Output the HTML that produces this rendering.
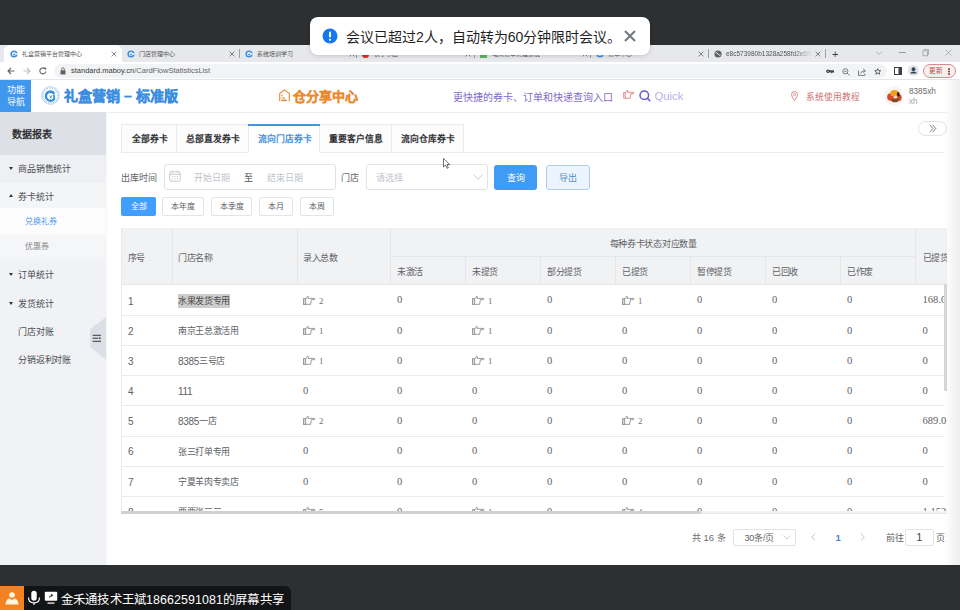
<!DOCTYPE html>
<html lang="zh-CN"><head><meta charset="utf-8">
<style>
*{box-sizing:border-box;margin:0;padding:0}
html,body{width:960px;height:610px;overflow:hidden;background:#fff;font-family:"Liberation Sans",sans-serif;color:#606266}
.a{position:absolute;white-space:nowrap}
.c{display:flex;align-items:center;justify-content:center}
</style></head><body>
<div class="a" style="left:0;top:0;width:960px;height:45px;background:#2c3033"></div>
<div class="a" style="left:0;top:45px;width:960px;height:17px;background:#e6e8eb"></div>
<div class="a" style="left:4px;top:45px;width:118px;height:17px;background:#fff;border-radius:6px 6px 0 0"></div>
<svg class="a" style="left:10px;top:50px" width="8" height="8" viewBox="0 0 8 8"><circle cx="4" cy="4" r="3.6" fill="#3d8fdc"/><circle cx="4" cy="4" r="2" fill="#fff"/><rect x="4" y="3.3" width="3.6" height="1.4" fill="#fff"/><circle cx="4.2" cy="4.4" r="1" fill="#3d8fdc"/></svg>
<div class="a" style="left:22px;top:50px;font-size:6px;line-height:8px;color:#555">礼盒营销平台管理中心</div>
<svg class="a" style="left:110.8px;top:50.5px" width="6" height="6" viewBox="0 0 6 6"><path d="M0.6 0.6 L5.4 5.4 M5.4 0.6 L0.6 5.4" stroke="#5a5e62" stroke-width="0.75"/></svg>
<svg class="a" style="left:127px;top:50px" width="8" height="8" viewBox="0 0 8 8"><circle cx="4" cy="4" r="3.6" fill="#3d8fdc"/><circle cx="4" cy="4" r="2" fill="#fff"/><rect x="4" y="3.3" width="3.6" height="1.4" fill="#fff"/><circle cx="4.2" cy="4.4" r="1" fill="#3d8fdc"/></svg>
<div class="a" style="left:139px;top:50px;font-size:6px;line-height:8px;color:#555">门店管理中心</div>
<svg class="a" style="left:229.0px;top:50.5px" width="6" height="6" viewBox="0 0 6 6"><path d="M0.6 0.6 L5.4 5.4 M5.4 0.6 L0.6 5.4" stroke="#5a5e62" stroke-width="0.75"/></svg>
<div class="a" style="left:239px;top:49px;width:1px;height:9px;background:#9aa0a6"></div>
<svg class="a" style="left:245px;top:50px" width="8" height="8" viewBox="0 0 8 8"><circle cx="4" cy="4" r="3.6" fill="#3d8fdc"/><circle cx="4" cy="4" r="2" fill="#fff"/><rect x="4" y="3.3" width="3.6" height="1.4" fill="#fff"/><circle cx="4.2" cy="4.4" r="1" fill="#3d8fdc"/></svg>
<div class="a" style="left:257px;top:50px;font-size:6px;line-height:8px;color:#555">系统培训学习</div>
<svg class="a" style="left:349.0px;top:50.5px" width="6" height="6" viewBox="0 0 6 6"><path d="M0.6 0.6 L5.4 5.4 M5.4 0.6 L0.6 5.4" stroke="#5a5e62" stroke-width="0.75"/></svg>
<div class="a" style="left:356px;top:49px;width:1px;height:9px;background:#9aa0a6"></div>
<div class="a" style="left:362px;top:51px;width:7px;height:7px;border-radius:50%;background:#d93025"></div>
<div class="a" style="left:374px;top:50px;font-size:6px;line-height:8px;color:#555">快手小店</div>
<svg class="a" style="left:465.0px;top:50.5px" width="6" height="6" viewBox="0 0 6 6"><path d="M0.6 0.6 L5.4 5.4 M5.4 0.6 L0.6 5.4" stroke="#5a5e62" stroke-width="0.75"/></svg>
<div class="a" style="left:474px;top:49px;width:1px;height:9px;background:#9aa0a6"></div>
<div class="a" style="left:480px;top:51px;width:7px;height:7px;background:#5cb85c"></div>
<div class="a" style="left:492px;top:50px;font-size:6px;line-height:8px;color:#555">电商订单处理系统</div>
<svg class="a" style="left:582.0px;top:50.5px" width="6" height="6" viewBox="0 0 6 6"><path d="M0.6 0.6 L5.4 5.4 M5.4 0.6 L0.6 5.4" stroke="#5a5e62" stroke-width="0.75"/></svg>
<div class="a" style="left:590px;top:49px;width:1px;height:9px;background:#9aa0a6"></div>
<svg class="a" style="left:596px;top:50px" width="8" height="8" viewBox="0 0 8 8"><circle cx="4" cy="4" r="3.6" fill="#3d8fdc"/><circle cx="4" cy="4" r="2" fill="#fff"/><rect x="4" y="3.3" width="3.6" height="1.4" fill="#fff"/><circle cx="4.2" cy="4.4" r="1" fill="#3d8fdc"/></svg>
<div class="a" style="left:608px;top:50px;font-size:6px;line-height:8px;color:#555">订单中心</div>
<svg class="a" style="left:698.0px;top:50.5px" width="6" height="6" viewBox="0 0 6 6"><path d="M0.6 0.6 L5.4 5.4 M5.4 0.6 L0.6 5.4" stroke="#5a5e62" stroke-width="0.75"/></svg>
<div class="a" style="left:708px;top:49px;width:1px;height:9px;background:#9aa0a6"></div>
<svg class="a" style="left:714px;top:50px" width="8" height="8" viewBox="0 0 8 8"><circle cx="4" cy="4" r="3.6" fill="#5f6368"/><path d="M1.5 3 Q3 2 4 4 T6.5 5" stroke="#fff" stroke-width="0.8" fill="none"/></svg>
<div class="a" style="left:726px;top:50px;width:86px;overflow:hidden;font-size:6.5px;line-height:8px;color:#555;-webkit-mask-image:linear-gradient(to right,#000 80%,transparent)">e8c573980b1328a258fd2e6f8</div>
<svg class="a" style="left:815.0px;top:50.5px" width="6" height="6" viewBox="0 0 6 6"><path d="M0.6 0.6 L5.4 5.4 M5.4 0.6 L0.6 5.4" stroke="#5a5e62" stroke-width="0.75"/></svg>
<div class="a" style="left:825px;top:49px;width:1px;height:9px;background:#9aa0a6"></div>
<div class="a" style="left:832px;top:47.5px;font-size:11px;line-height:13px;color:#3c4043">+</div>
<svg class="a" style="left:875px;top:50px" width="8" height="6" viewBox="0 0 8 6"><path d="M1 1.5 L4 4.5 L7 1.5" stroke="#9a9a9a" stroke-width="0.7" fill="none"/></svg>
<div class="a" style="left:899px;top:52px;width:7px;height:1px;background:#999"></div>
<svg class="a" style="left:921px;top:48px" width="9" height="9" viewBox="0 0 9 9"><rect x="2" y="2.8" width="4.5" height="5" stroke="#999" stroke-width="0.7" fill="none"/><path d="M3.2 2.8 V1.5 H7.5 V6.5 H6.5" stroke="#999" stroke-width="0.7" fill="none"/></svg>
<svg class="a" style="left:944px;top:48px" width="9" height="9" viewBox="0 0 9 9"><path d="M1.5 1.5 L7.5 7.5 M7.5 1.5 L1.5 7.5" stroke="#999" stroke-width="0.7"/></svg>
<div class="a" style="left:0;top:62px;width:960px;height:18px;background:#fff;border-bottom:1px solid #e3e5e8"></div>
<svg class="a" style="left:7px;top:67px" width="8" height="8" viewBox="0 0 8 8"><path d="M7.5 4 H1 M4 1 L1 4 L4 7" stroke="#5f6368" stroke-width="1.1" fill="none"/></svg>
<svg class="a" style="left:23px;top:67px" width="8" height="8" viewBox="0 0 8 8"><path d="M0.5 4 H7 M4 1 L7 4 L4 7" stroke="#bdc1c6" stroke-width="1.1" fill="none"/></svg>
<svg class="a" style="left:39px;top:67px" width="8" height="8" viewBox="0 0 8 8"><path d="M6.8 4.5 A3 3 0 1 1 5.8 1.6" stroke="#5f6368" stroke-width="1.1" fill="none"/><path d="M4.6 0.5 L7.3 0.8 L7 3.3 Z" fill="#5f6368"/></svg>
<div class="a" style="left:54px;top:64px;width:833px;height:14px;border-radius:7px;background:#f1f3f4"></div>
<svg class="a" style="left:60px;top:67px" width="6" height="8" viewBox="0 0 6 8"><rect x="0.5" y="3.3" width="5" height="4.2" rx="0.5" fill="#5f6368"/><path d="M1.6 3.5 V2.3 A1.4 1.4 0 0 1 4.4 2.3 V3.5" stroke="#5f6368" stroke-width="0.9" fill="none"/></svg>
<div class="a" style="left:71px;top:66px;font-size:7.5px;line-height:10px;color:#3a3a3a">standard.maboy.cn<span style="color:#5f6368">/CardFlowStatisticsList</span></div>
<svg class="a" style="left:825.5px;top:68.8px" width="8" height="5" viewBox="0 0 8 5"><circle cx="2" cy="2.3" r="1.8" fill="#3c4043"/><path d="M3 1.8 H7.8 V2.8 H3Z M5.5 2.8 V4.3 M7.2 2.8 V4" stroke="#3c4043" stroke-width="0.9" fill="#3c4043"/><circle cx="2" cy="2.3" r="0.6" fill="#f1f3f4"/></svg>
<svg class="a" style="left:842px;top:67.5px" width="8" height="8" viewBox="0 0 8 8"><circle cx="3.3" cy="3.3" r="2.6" stroke="#5f6368" stroke-width="0.8" fill="none"/><path d="M5.2 5.2 L7.6 7.6 M2 3.3 H4.6" stroke="#5f6368" stroke-width="0.8"/></svg>
<svg class="a" style="left:857.5px;top:67.5px" width="9" height="8" viewBox="0 0 9 8"><path d="M0.5 2.5 V7.4 H6.8 V5.5 M2.5 5.6 Q3 3 6.5 2.8 M5.2 1 L7.4 2.8 L5.2 4.6" stroke="#5f6368" stroke-width="0.8" fill="none"/></svg>
<svg class="a" style="left:873.8px;top:68px" width="7.5" height="7" viewBox="0 0 9 9"><path d="M4.5 0.8 L5.6 3.3 L8.3 3.5 L6.2 5.3 L6.9 8 L4.5 6.5 L2.1 8 L2.8 5.3 L0.7 3.5 L3.4 3.3 Z" stroke="#3c4043" stroke-width="1" fill="none" stroke-linejoin="round"/></svg>
<svg class="a" style="left:893.5px;top:67px" width="8" height="8" viewBox="0 0 8 8"><rect x="0.5" y="0.5" width="7" height="7" stroke="#3c4043" stroke-width="1" fill="none"/><rect x="4.5" y="0.5" width="3" height="7" fill="#3c4043"/></svg>
<svg class="a" style="left:908px;top:65px" width="11" height="11" viewBox="0 0 11 11"><circle cx="5.5" cy="5.5" r="5.5" fill="#e1e4e9"/><circle cx="5.5" cy="4.2" r="1.9" fill="#34405c"/><path d="M2.2 8.6 Q2.6 6.4 5.5 6.4 Q8.4 6.4 8.8 8.6 Z" fill="#34405c"/></svg>
<div class="a" style="left:922.5px;top:64px;width:33px;height:13.5px;border:1px solid #d38c8c;border-radius:7px;background:#fbeeee"></div>
<div class="a" style="left:929px;top:66.3px;font-size:6.5px;line-height:10px;color:#b94a4a">更新</div>
<div class="a" style="left:948.3px;top:68px;width:1.5px;height:1.5px;background:#8b3a3a;box-shadow:0 2.5px 0 #8b3a3a,0 5px 0 #8b3a3a;border-radius:1px"></div>
<div class="a" style="left:0;top:80px;width:960px;height:33px;background:#fff;border-bottom:1px solid #eceef1"></div>
<div class="a" style="left:0;top:80px;width:31px;height:32px;background:#3f98ee;color:#fff;font-size:9px;line-height:12.7px;text-align:center;padding-top:3.5px">功能<br>导航</div>
<svg class="a" style="left:41px;top:86px" width="19" height="19" viewBox="0 0 19 19"><circle cx="9.5" cy="9.5" r="9" fill="#fff" stroke="#9cc8f3" stroke-width="0.6"/><circle cx="9.5" cy="9.5" r="7.6" fill="none" stroke="#5aa2ea" stroke-width="1.1" stroke-dasharray="0.7 1"/><path d="M13.2 7.4 A4.6 4.6 0 1 0 13.6 12.2" stroke="#3a8ee6" stroke-width="2.4" fill="none"/><path d="M5.8 6.6 Q9.5 5.6 13.4 7.6" stroke="#3a8ee6" stroke-width="1.6" fill="none"/><path d="M12.4 8.6 Q14 10.5 12.6 13" stroke="#3a8ee6" stroke-width="1.6" fill="none"/><path d="M8.6 9.6 L9.8 12 L10.8 9.4" stroke="#3a8ee6" stroke-width="0.9" fill="none"/></svg>
<div class="a" style="left:64px;top:86.5px;font-size:14px;line-height:19px;font-weight:bold;color:#3b8de2;-webkit-text-stroke:0.35px #3b8de2">礼盒营销 – 标准版</div>
<svg class="a" style="left:279px;top:88.5px" width="11" height="13" viewBox="0 0 11 13"><path d="M0.7 12.2 V4.5 L5.5 0.9 L10.3 4.5 V12.2" stroke="#e48a35" stroke-width="1.1" fill="none"/><rect x="2.4" y="5.8" width="1.3" height="1.3" fill="#e48a35"/><rect x="2.4" y="8" width="1.3" height="1.6" fill="#f0b030"/><rect x="4.3" y="8.3" width="1.4" height="1.4" fill="#d9773a"/><rect x="2.4" y="10.6" width="5.4" height="1.5" fill="#d98040"/></svg>
<div class="a" style="left:293px;top:86.5px;font-size:13px;line-height:19px;font-weight:bold;color:#e98a2f;-webkit-text-stroke:0.3px #e98a2f">仓分享中心</div>
<div class="a" style="left:453px;top:90.5px;font-size:10px;line-height:13px;color:#7f6cc8">更快捷的券卡、订单和快递查询入口</div>
<svg class="a" style="left:623px;top:90px" width="12" height="10" viewBox="0 0 12 10"><path d="M0.5 2.6 H2.3 V8.3 H0.5 Z" stroke="#e08a8a" stroke-width="0.8" fill="#f6d0d0"/><path d="M2.3 2.6 L3.9 0.4 H4.8 L4.5 2.3 H10.6 Q11.3 3 10.6 3.8 H7.8 L7 8.3 H2.3" stroke="#e07f7f" stroke-width="0.9" fill="none" stroke-linejoin="round"/></svg>
<svg class="a" style="left:639px;top:89.5px" width="12" height="12" viewBox="0 0 12 12"><circle cx="5.3" cy="5.2" r="4.3" stroke="#6a5acd" stroke-width="1.5" fill="none"/><path d="M8.4 8.4 L10.8 10.8" stroke="#6a5acd" stroke-width="1.5" stroke-linecap="round"/></svg>
<div class="a" style="left:654.5px;top:88.5px;font-size:11.3px;line-height:15px;color:#bdb0ea">Quick</div>
<svg class="a" style="left:791px;top:91px" width="7" height="10" viewBox="0 0 7 10"><path d="M3.5 9.5 Q0.5 5.5 0.5 3.5 A3 3 0 0 1 6.5 3.5 Q6.5 5.5 3.5 9.5Z" stroke="#e07a7a" stroke-width="0.9" fill="none"/><circle cx="3.5" cy="3.5" r="1.1" stroke="#e07a7a" stroke-width="0.8" fill="none"/></svg>
<div class="a" style="left:806px;top:91.5px;font-size:8.7px;line-height:11px;color:#cf7070">系统使用教程</div>
<svg class="a" style="left:883.5px;top:86px" width="20" height="20" viewBox="0 0 20 20"><circle cx="10" cy="10" r="9.8" fill="#f7f4f1"/><ellipse cx="6.5" cy="11" rx="3.3" ry="3.8" fill="#d9462a"/><ellipse cx="10.5" cy="7.3" rx="4.3" ry="3.2" fill="#f0a020"/><ellipse cx="14.8" cy="11.5" rx="2.8" ry="3.5" fill="#c84a26"/><ellipse cx="14.3" cy="8.3" rx="1.4" ry="2.3" fill="#3a2414"/><ellipse cx="11" cy="14.3" rx="3.6" ry="2" fill="#8a4528"/><circle cx="12" cy="11" r="1.4" fill="#f6dcae"/></svg>
<div class="a" style="left:909px;top:86px;font-size:8.2px;line-height:11px;color:#6a6a6a">8385xh</div>
<div class="a" style="left:909px;top:95.5px;font-size:8.2px;line-height:11px;color:#a8a8a8">xh</div>
<div class="a" style="left:0;top:112px;width:107px;height:453px;background:#f0f2f5;border-right:1px solid #f6f7f8"></div>
<div class="a" style="left:0;top:112px;width:106px;height:43px;background:#dde0e6"></div>
<div class="a" style="left:12.3px;top:128px;font-size:10px;line-height:13px;font-weight:bold;color:#303133">数据报表</div>
<div class="a" style="left:0;top:155px;width:106px;height:28px;background:#eff0f3"></div>
<div class="a" style="left:0;top:183px;width:106px;height:25px;background:#f4f5f7"></div>
<div class="a" style="left:0;top:208px;width:106px;height:25.5px;background:#fcfcfd"></div>
<div class="a" style="left:0;top:233.5px;width:106px;height:25.5px;background:#f5f6f8"></div>
<div class="a" style="left:8.5px;top:166.5px;width:0;height:0;border-left:2.2px solid transparent;border-right:2.2px solid transparent;border-top:3.2px solid #333"></div>
<div class="a" style="left:18.3px;top:162.8px;font-size:9px;letter-spacing:-0.25px;line-height:12px;color:#4a4d52">商品销售统计</div>
<div class="a" style="left:8.5px;top:193.8px;width:0;height:0;border-left:2.2px solid transparent;border-right:2.2px solid transparent;border-bottom:3.2px solid #333"></div>
<div class="a" style="left:18.3px;top:190.8px;font-size:9px;letter-spacing:-0.25px;line-height:12px;color:#4a4d52">券卡统计</div>
<div class="a" style="left:25.2px;top:216.3px;font-size:8px;letter-spacing:0.1px;line-height:12px;color:#4d9be8">兑换礼券</div>
<div class="a" style="left:25.2px;top:241.20000000000002px;font-size:8px;letter-spacing:0.1px;line-height:12px;color:#888">优惠券</div>
<div class="a" style="left:8.5px;top:273.0px;width:0;height:0;border-left:2.2px solid transparent;border-right:2.2px solid transparent;border-top:3.2px solid #333"></div>
<div class="a" style="left:18.3px;top:269.3px;font-size:9px;letter-spacing:-0.25px;line-height:12px;color:#4a4d52">订单统计</div>
<div class="a" style="left:8.5px;top:301.5px;width:0;height:0;border-left:2.2px solid transparent;border-right:2.2px solid transparent;border-top:3.2px solid #333"></div>
<div class="a" style="left:18.3px;top:297.8px;font-size:9px;letter-spacing:-0.25px;line-height:12px;color:#4a4d52">发货统计</div>
<div class="a" style="left:18.3px;top:325.8px;font-size:9px;letter-spacing:-0.25px;line-height:12px;color:#4a4d52">门店对账</div>
<div class="a" style="left:18.3px;top:353.8px;font-size:9px;letter-spacing:-0.25px;line-height:12px;color:#4a4d52">分销返利对账</div>
<svg class="a" style="left:90px;top:317px" width="16" height="43" viewBox="0 0 16 43"><path d="M16 0 L0.2 12 V30 L16 43 Z" fill="#dcdfe5"/><path d="M2.7 18.3 H11 M2.7 21.2 H8.3 M2.7 24.3 H11" stroke="#3a3a3a" stroke-width="1"/><path d="M9.2 19.8 L11 21.2 L9.2 22.6Z" fill="#3a3a3a"/></svg>
<div class="a" style="left:121px;top:124px;width:343px;height:28px;border:1px solid #e9ebee;border-bottom:none;background:#fcfcfd"></div>
<div class="a" style="left:121px;top:152px;width:823px;height:1px;background:#e8eaee"></div>
<div class="a" style="left:248px;top:124px;width:72px;height:29px;background:#fff"></div>
<div class="a" style="left:176px;top:125px;width:1px;height:27px;background:#e8eaee"></div>
<div class="a" style="left:248px;top:125px;width:1px;height:27px;background:#e8eaee"></div>
<div class="a" style="left:319px;top:125px;width:1px;height:27px;background:#e8eaee"></div>
<div class="a" style="left:391px;top:125px;width:1px;height:27px;background:#e8eaee"></div>
<div class="a" style="left:248px;top:124px;width:72px;height:2px;background:#4592e0"></div>
<div class="a c" style="left:122px;top:125px;width:55px;height:27px;font-size:8.8px;font-weight:bold;color:#303133">全部券卡</div>
<div class="a c" style="left:177px;top:125px;width:72px;height:27px;font-size:8.8px;font-weight:bold;color:#303133">总部直发券卡</div>
<div class="a c" style="left:249px;top:125px;width:71px;height:27px;font-size:8.8px;font-weight:bold;color:#4592e0">流向门店券卡</div>
<div class="a c" style="left:320px;top:125px;width:72px;height:27px;font-size:8.8px;font-weight:bold;color:#303133">重要客户信息</div>
<div class="a c" style="left:392px;top:125px;width:72px;height:27px;font-size:8.8px;font-weight:bold;color:#303133">流向仓库券卡</div>
<div class="a" style="left:918px;top:121px;width:29px;height:15px;border:1px solid #e2e4e8;border-radius:8px;background:#fff"></div>
<svg class="a" style="left:929px;top:124px" width="8" height="9" viewBox="0 0 8 9"><path d="M0.8 0.8 L4 4.5 L0.8 8.2 M3.6 0.8 L6.8 4.5 L3.6 8.2" stroke="#666" stroke-width="0.8" fill="none"/></svg>
<div class="a" style="left:121px;top:172px;font-size:9px;line-height:12px;color:#606266">出库时间</div>
<div class="a" style="left:164px;top:164px;width:171.5px;height:25.5px;border:1px solid #e0e2e6;border-radius:3px;background:#fff"></div>
<svg class="a" style="left:169px;top:170px" width="12" height="12" viewBox="0 0 12 12"><rect x="0.8" y="1.8" width="10.4" height="9.4" rx="1" stroke="#c0c4cc" stroke-width="0.9" fill="none"/><path d="M0.8 4.3 H11.2 M3.3 0.5 V2.5 M8.7 0.5 V2.5 M3 6.5 H4 M5.5 6.5 H6.5 M8 6.5 H9 M3 8.8 H4 M5.5 8.8 H6.5 M8 8.8 H9" stroke="#c0c4cc" stroke-width="0.9"/></svg>
<div class="a" style="left:193.5px;top:172px;font-size:9px;line-height:12px;color:#c0c4cc">开始日期</div>
<div class="a" style="left:244px;top:172px;font-size:9px;line-height:12px;color:#4a4a4a">至</div>
<div class="a" style="left:267px;top:172px;font-size:9px;line-height:12px;color:#c0c4cc">结束日期</div>
<div class="a" style="left:341px;top:172px;font-size:9px;line-height:12px;color:#606266">门店</div>
<div class="a" style="left:366px;top:164px;width:121.5px;height:25.5px;border:1px solid #e0e2e6;border-radius:3px;background:#fff"></div>
<div class="a" style="left:376px;top:172px;font-size:9px;line-height:12px;color:#c0c4cc">请选择</div>
<svg class="a" style="left:472.5px;top:173.5px" width="10" height="6" viewBox="0 0 10 6"><path d="M0.5 0.7 L5 5.2 L9.5 0.7" stroke="#c0c4cc" stroke-width="0.9" fill="none"/></svg>
<div class="a c" style="left:494px;top:165px;width:43px;height:24.5px;padding-top:1px;background:#3f9bf3;border-radius:3px;color:#fff;font-size:9px">查询</div>
<div class="a c" style="left:546px;top:165px;width:44px;height:24.5px;background:#ecf4fd;border:1px solid #aecdee;border-radius:3px;color:#5b8fc6;font-size:9px;padding-top:1px">导出</div>
<svg class="a" style="left:442.8px;top:157.5px" width="8" height="11" viewBox="0 0 8 11"><path d="M0.5 0.5 V9 L2.6 7 L4 10.3 L5.3 9.7 L4 6.6 H6.8 Z" fill="#fff" stroke="#333" stroke-width="0.7"/></svg>
<div class="a c" style="left:121px;top:196.5px;width:35px;height:19px;background:#409eff;border-radius:2px;color:#fff;font-size:8px;padding-bottom:1px">全部</div>
<div class="a c" style="left:162px;top:196.5px;width:42px;height:19px;background:#fff;border:1px solid #e2e4e8;border-radius:2px;color:#606266;font-size:8px;padding-bottom:1px">本年度</div>
<div class="a c" style="left:211px;top:196.5px;width:41px;height:19px;background:#fff;border:1px solid #e2e4e8;border-radius:2px;color:#606266;font-size:8px;padding-bottom:1px">本季度</div>
<div class="a c" style="left:259px;top:196.5px;width:34px;height:19px;background:#fff;border:1px solid #e2e4e8;border-radius:2px;color:#606266;font-size:8px;padding-bottom:1px">本月</div>
<div class="a c" style="left:300px;top:196.5px;width:34px;height:19px;background:#fff;border:1px solid #e2e4e8;border-radius:2px;color:#606266;font-size:8px;padding-bottom:1px">本周</div>
<div class="a" style="left:121px;top:228px;width:826px;height:56px;background:#f1f2f4"></div>
<div class="a" style="left:121px;top:284px;width:826px;height:1px;background:#e6e7e9"></div>
<div class="a" style="left:172px;top:228px;width:1px;height:56px;background:#e4e6ea"></div>
<div class="a" style="left:297px;top:228px;width:1px;height:56px;background:#e4e6ea"></div>
<div class="a" style="left:390px;top:228px;width:1px;height:56px;background:#e4e6ea"></div>
<div class="a" style="left:915px;top:228px;width:1px;height:56px;background:#e4e6ea"></div>
<div class="a" style="left:465px;top:256px;width:1px;height:28px;background:#e4e6ea"></div>
<div class="a" style="left:540px;top:256px;width:1px;height:28px;background:#e4e6ea"></div>
<div class="a" style="left:615px;top:256px;width:1px;height:28px;background:#e4e6ea"></div>
<div class="a" style="left:690px;top:256px;width:1px;height:28px;background:#e4e6ea"></div>
<div class="a" style="left:765px;top:256px;width:1px;height:28px;background:#e4e6ea"></div>
<div class="a" style="left:840px;top:256px;width:1px;height:28px;background:#e4e6ea"></div>
<div class="a" style="left:390px;top:256px;width:525px;height:1px;background:#e4e6ea"></div>
<div class="a" style="left:127.5px;top:252.1px;font-size:9px;letter-spacing:-0.3px;line-height:12px;color:#5f6166">序号</div>
<div class="a" style="left:178px;top:252.1px;font-size:9px;letter-spacing:-0.3px;line-height:12px;color:#5f6166">门店名称</div>
<div class="a" style="left:303px;top:252.4px;font-size:9px;letter-spacing:-0.3px;line-height:12px;color:#5f6166">录入总数</div>
<div class="a" style="left:609.7px;top:237.9px;font-size:9px;letter-spacing:-0.3px;line-height:12px;color:#5f6166">每种券卡状态对应数量</div>
<div class="a" style="left:397px;top:265.9px;font-size:9px;letter-spacing:-0.3px;line-height:12px;color:#5f6166">未激活</div>
<div class="a" style="left:472px;top:265.9px;font-size:9px;letter-spacing:-0.3px;line-height:12px;color:#5f6166">未提货</div>
<div class="a" style="left:547px;top:265.9px;font-size:9px;letter-spacing:-0.3px;line-height:12px;color:#5f6166">部分提货</div>
<div class="a" style="left:622px;top:265.9px;font-size:9px;letter-spacing:-0.3px;line-height:12px;color:#5f6166">已提货</div>
<div class="a" style="left:697px;top:265.9px;font-size:9px;letter-spacing:-0.3px;line-height:12px;color:#5f6166">暂停提货</div>
<div class="a" style="left:772px;top:265.9px;font-size:9px;letter-spacing:-0.3px;line-height:12px;color:#5f6166">已回收</div>
<div class="a" style="left:847px;top:265.9px;font-size:9px;letter-spacing:-0.3px;line-height:12px;color:#5f6166">已作废</div>
<div class="a" style="left:922.5px;top:252.1px;font-size:9px;letter-spacing:-0.3px;line-height:12px;color:#5f6166">已提货</div>
<div class="a" style="left:121px;top:284px;width:826px;height:227px;overflow:hidden"><div class="a" style="left:7px;top:11.58499999999999px;line-height:12px;font-size:10px;color:#606266">1</div><div class="a" style="left:57px;top:10.784999999999991px;line-height:12px;font-size:9px;letter-spacing:-0.35px;color:#606266"><span style="background:#cdcdcd;color:#4a4a4a;padding:2px 0 2.5px">水果发货专用</span></div><div class="a" style="left:181.8px;top:11.58499999999999px;line-height:0"><svg width="13" height="10" viewBox="0 0 13 10"><rect x="0.45" y="2.75" width="2.3" height="5.6" fill="#d5dadf" stroke="#7a7a7a" stroke-width="0.7"/><path d="M2.8 2.8 L4.4 0.5 H5.3 L5 2.4 H11.6 Q12.2 3 11.6 3.7 H8.4 L7.6 8.35 H2.8" stroke="#747474" stroke-width="0.7" fill="none" stroke-linejoin="round"/></svg></div><div class="a" style="left:198px;top:10.58499999999999px;line-height:12px;font-family:'Liberation Serif',serif;font-size:8.8px;color:#707070">2</div><div class="a" style="left:276px;top:10.48499999999999px;line-height:12px;font-family:'Liberation Serif',serif;font-size:10.6px;color:#606266">0</div><div class="a" style="left:350.8px;top:11.58499999999999px;line-height:0"><svg width="13" height="10" viewBox="0 0 13 10"><rect x="0.45" y="2.75" width="2.3" height="5.6" fill="#d5dadf" stroke="#7a7a7a" stroke-width="0.7"/><path d="M2.8 2.8 L4.4 0.5 H5.3 L5 2.4 H11.6 Q12.2 3 11.6 3.7 H8.4 L7.6 8.35 H2.8" stroke="#747474" stroke-width="0.7" fill="none" stroke-linejoin="round"/></svg></div><div class="a" style="left:367px;top:10.58499999999999px;line-height:12px;font-family:'Liberation Serif',serif;font-size:8.8px;color:#707070">1</div><div class="a" style="left:426px;top:10.48499999999999px;line-height:12px;font-family:'Liberation Serif',serif;font-size:10.6px;color:#606266">0</div><div class="a" style="left:500.8px;top:11.58499999999999px;line-height:0"><svg width="13" height="10" viewBox="0 0 13 10"><rect x="0.45" y="2.75" width="2.3" height="5.6" fill="#d5dadf" stroke="#7a7a7a" stroke-width="0.7"/><path d="M2.8 2.8 L4.4 0.5 H5.3 L5 2.4 H11.6 Q12.2 3 11.6 3.7 H8.4 L7.6 8.35 H2.8" stroke="#747474" stroke-width="0.7" fill="none" stroke-linejoin="round"/></svg></div><div class="a" style="left:517px;top:10.58499999999999px;line-height:12px;font-family:'Liberation Serif',serif;font-size:8.8px;color:#707070">1</div><div class="a" style="left:576px;top:10.48499999999999px;line-height:12px;font-family:'Liberation Serif',serif;font-size:10.6px;color:#606266">0</div><div class="a" style="left:651px;top:10.48499999999999px;line-height:12px;font-family:'Liberation Serif',serif;font-size:10.6px;color:#606266">0</div><div class="a" style="left:726px;top:10.48499999999999px;line-height:12px;font-family:'Liberation Serif',serif;font-size:10.6px;color:#606266">0</div><div class="a" style="left:801.5px;top:10.48499999999999px;line-height:12px;font-family:'Liberation Serif',serif;font-size:10.6px;color:#606266">168.0</div><div class="a" style="left:0;top:31px;width:823px;height:1px;background:#ebebeb"></div><div class="a" style="left:7px;top:41.75500000000001px;line-height:12px;font-size:10px;color:#606266">2</div><div class="a" style="left:57px;top:40.955000000000005px;line-height:12px;font-size:9px;letter-spacing:-0.35px;color:#606266">南京王总激活用</div><div class="a" style="left:181.8px;top:41.75500000000001px;line-height:0"><svg width="13" height="10" viewBox="0 0 13 10"><rect x="0.45" y="2.75" width="2.3" height="5.6" fill="#d5dadf" stroke="#7a7a7a" stroke-width="0.7"/><path d="M2.8 2.8 L4.4 0.5 H5.3 L5 2.4 H11.6 Q12.2 3 11.6 3.7 H8.4 L7.6 8.35 H2.8" stroke="#747474" stroke-width="0.7" fill="none" stroke-linejoin="round"/></svg></div><div class="a" style="left:198px;top:40.75500000000001px;line-height:12px;font-family:'Liberation Serif',serif;font-size:8.8px;color:#707070">1</div><div class="a" style="left:276px;top:40.65500000000001px;line-height:12px;font-family:'Liberation Serif',serif;font-size:10.6px;color:#606266">0</div><div class="a" style="left:350.8px;top:41.75500000000001px;line-height:0"><svg width="13" height="10" viewBox="0 0 13 10"><rect x="0.45" y="2.75" width="2.3" height="5.6" fill="#d5dadf" stroke="#7a7a7a" stroke-width="0.7"/><path d="M2.8 2.8 L4.4 0.5 H5.3 L5 2.4 H11.6 Q12.2 3 11.6 3.7 H8.4 L7.6 8.35 H2.8" stroke="#747474" stroke-width="0.7" fill="none" stroke-linejoin="round"/></svg></div><div class="a" style="left:367px;top:40.75500000000001px;line-height:12px;font-family:'Liberation Serif',serif;font-size:8.8px;color:#707070">1</div><div class="a" style="left:426px;top:40.65500000000001px;line-height:12px;font-family:'Liberation Serif',serif;font-size:10.6px;color:#606266">0</div><div class="a" style="left:501px;top:40.65500000000001px;line-height:12px;font-family:'Liberation Serif',serif;font-size:10.6px;color:#606266">0</div><div class="a" style="left:576px;top:40.65500000000001px;line-height:12px;font-family:'Liberation Serif',serif;font-size:10.6px;color:#606266">0</div><div class="a" style="left:651px;top:40.65500000000001px;line-height:12px;font-family:'Liberation Serif',serif;font-size:10.6px;color:#606266">0</div><div class="a" style="left:726px;top:40.65500000000001px;line-height:12px;font-family:'Liberation Serif',serif;font-size:10.6px;color:#606266">0</div><div class="a" style="left:801.5px;top:40.65500000000001px;line-height:12px;font-family:'Liberation Serif',serif;font-size:10.6px;color:#606266">0</div><div class="a" style="left:0;top:61px;width:823px;height:1px;background:#ebebeb"></div><div class="a" style="left:7px;top:71.92499999999997px;line-height:12px;font-size:10px;color:#606266">3</div><div class="a" style="left:57px;top:71.12499999999997px;line-height:12px;font-size:9px;letter-spacing:-0.35px;color:#606266"><span style="font-size:10px;position:relative;top:0.6px">8385</span>三号店</div><div class="a" style="left:181.8px;top:71.92499999999997px;line-height:0"><svg width="13" height="10" viewBox="0 0 13 10"><rect x="0.45" y="2.75" width="2.3" height="5.6" fill="#d5dadf" stroke="#7a7a7a" stroke-width="0.7"/><path d="M2.8 2.8 L4.4 0.5 H5.3 L5 2.4 H11.6 Q12.2 3 11.6 3.7 H8.4 L7.6 8.35 H2.8" stroke="#747474" stroke-width="0.7" fill="none" stroke-linejoin="round"/></svg></div><div class="a" style="left:198px;top:70.92499999999997px;line-height:12px;font-family:'Liberation Serif',serif;font-size:8.8px;color:#707070">1</div><div class="a" style="left:276px;top:70.82499999999996px;line-height:12px;font-family:'Liberation Serif',serif;font-size:10.6px;color:#606266">0</div><div class="a" style="left:350.8px;top:71.92499999999997px;line-height:0"><svg width="13" height="10" viewBox="0 0 13 10"><rect x="0.45" y="2.75" width="2.3" height="5.6" fill="#d5dadf" stroke="#7a7a7a" stroke-width="0.7"/><path d="M2.8 2.8 L4.4 0.5 H5.3 L5 2.4 H11.6 Q12.2 3 11.6 3.7 H8.4 L7.6 8.35 H2.8" stroke="#747474" stroke-width="0.7" fill="none" stroke-linejoin="round"/></svg></div><div class="a" style="left:367px;top:70.92499999999997px;line-height:12px;font-family:'Liberation Serif',serif;font-size:8.8px;color:#707070">1</div><div class="a" style="left:426px;top:70.82499999999996px;line-height:12px;font-family:'Liberation Serif',serif;font-size:10.6px;color:#606266">0</div><div class="a" style="left:501px;top:70.82499999999996px;line-height:12px;font-family:'Liberation Serif',serif;font-size:10.6px;color:#606266">0</div><div class="a" style="left:576px;top:70.82499999999996px;line-height:12px;font-family:'Liberation Serif',serif;font-size:10.6px;color:#606266">0</div><div class="a" style="left:651px;top:70.82499999999996px;line-height:12px;font-family:'Liberation Serif',serif;font-size:10.6px;color:#606266">0</div><div class="a" style="left:726px;top:70.82499999999996px;line-height:12px;font-family:'Liberation Serif',serif;font-size:10.6px;color:#606266">0</div><div class="a" style="left:801.5px;top:70.82499999999996px;line-height:12px;font-family:'Liberation Serif',serif;font-size:10.6px;color:#606266">0</div><div class="a" style="left:0;top:91px;width:823px;height:1px;background:#ebebeb"></div><div class="a" style="left:7px;top:102.09499999999998px;line-height:12px;font-size:10px;color:#606266">4</div><div class="a" style="left:57px;top:101.29499999999999px;line-height:12px;font-size:9px;letter-spacing:-0.35px;color:#606266"><span style="font-size:10px;position:relative;top:0.6px">111</span></div><div class="a" style="left:182px;top:100.99499999999998px;line-height:12px;font-family:'Liberation Serif',serif;font-size:10.6px;color:#606266">0</div><div class="a" style="left:276px;top:100.99499999999998px;line-height:12px;font-family:'Liberation Serif',serif;font-size:10.6px;color:#606266">0</div><div class="a" style="left:351px;top:100.99499999999998px;line-height:12px;font-family:'Liberation Serif',serif;font-size:10.6px;color:#606266">0</div><div class="a" style="left:426px;top:100.99499999999998px;line-height:12px;font-family:'Liberation Serif',serif;font-size:10.6px;color:#606266">0</div><div class="a" style="left:501px;top:100.99499999999998px;line-height:12px;font-family:'Liberation Serif',serif;font-size:10.6px;color:#606266">0</div><div class="a" style="left:576px;top:100.99499999999998px;line-height:12px;font-family:'Liberation Serif',serif;font-size:10.6px;color:#606266">0</div><div class="a" style="left:651px;top:100.99499999999998px;line-height:12px;font-family:'Liberation Serif',serif;font-size:10.6px;color:#606266">0</div><div class="a" style="left:726px;top:100.99499999999998px;line-height:12px;font-family:'Liberation Serif',serif;font-size:10.6px;color:#606266">0</div><div class="a" style="left:801.5px;top:100.99499999999998px;line-height:12px;font-family:'Liberation Serif',serif;font-size:10.6px;color:#606266">0</div><div class="a" style="left:0;top:121px;width:823px;height:1px;background:#ebebeb"></div><div class="a" style="left:7px;top:132.265px;line-height:12px;font-size:10px;color:#606266">5</div><div class="a" style="left:57px;top:131.465px;line-height:12px;font-size:9px;letter-spacing:-0.35px;color:#606266"><span style="font-size:10px;position:relative;top:0.6px">8385</span>一店</div><div class="a" style="left:181.8px;top:132.265px;line-height:0"><svg width="13" height="10" viewBox="0 0 13 10"><rect x="0.45" y="2.75" width="2.3" height="5.6" fill="#d5dadf" stroke="#7a7a7a" stroke-width="0.7"/><path d="M2.8 2.8 L4.4 0.5 H5.3 L5 2.4 H11.6 Q12.2 3 11.6 3.7 H8.4 L7.6 8.35 H2.8" stroke="#747474" stroke-width="0.7" fill="none" stroke-linejoin="round"/></svg></div><div class="a" style="left:198px;top:131.265px;line-height:12px;font-family:'Liberation Serif',serif;font-size:8.8px;color:#707070">2</div><div class="a" style="left:276px;top:131.165px;line-height:12px;font-family:'Liberation Serif',serif;font-size:10.6px;color:#606266">0</div><div class="a" style="left:351px;top:131.165px;line-height:12px;font-family:'Liberation Serif',serif;font-size:10.6px;color:#606266">0</div><div class="a" style="left:426px;top:131.165px;line-height:12px;font-family:'Liberation Serif',serif;font-size:10.6px;color:#606266">0</div><div class="a" style="left:500.8px;top:132.265px;line-height:0"><svg width="13" height="10" viewBox="0 0 13 10"><rect x="0.45" y="2.75" width="2.3" height="5.6" fill="#d5dadf" stroke="#7a7a7a" stroke-width="0.7"/><path d="M2.8 2.8 L4.4 0.5 H5.3 L5 2.4 H11.6 Q12.2 3 11.6 3.7 H8.4 L7.6 8.35 H2.8" stroke="#747474" stroke-width="0.7" fill="none" stroke-linejoin="round"/></svg></div><div class="a" style="left:517px;top:131.265px;line-height:12px;font-family:'Liberation Serif',serif;font-size:8.8px;color:#707070">2</div><div class="a" style="left:576px;top:131.165px;line-height:12px;font-family:'Liberation Serif',serif;font-size:10.6px;color:#606266">0</div><div class="a" style="left:651px;top:131.165px;line-height:12px;font-family:'Liberation Serif',serif;font-size:10.6px;color:#606266">0</div><div class="a" style="left:726px;top:131.165px;line-height:12px;font-family:'Liberation Serif',serif;font-size:10.6px;color:#606266">0</div><div class="a" style="left:801.5px;top:131.165px;line-height:12px;font-family:'Liberation Serif',serif;font-size:10.6px;color:#606266">689.0</div><div class="a" style="left:0;top:152px;width:823px;height:1px;background:#ebebeb"></div><div class="a" style="left:7px;top:162.435px;line-height:12px;font-size:10px;color:#606266">6</div><div class="a" style="left:57px;top:161.63500000000002px;line-height:12px;font-size:9px;letter-spacing:-0.35px;color:#606266">张三打单专用</div><div class="a" style="left:182px;top:161.335px;line-height:12px;font-family:'Liberation Serif',serif;font-size:10.6px;color:#606266">0</div><div class="a" style="left:276px;top:161.335px;line-height:12px;font-family:'Liberation Serif',serif;font-size:10.6px;color:#606266">0</div><div class="a" style="left:351px;top:161.335px;line-height:12px;font-family:'Liberation Serif',serif;font-size:10.6px;color:#606266">0</div><div class="a" style="left:426px;top:161.335px;line-height:12px;font-family:'Liberation Serif',serif;font-size:10.6px;color:#606266">0</div><div class="a" style="left:501px;top:161.335px;line-height:12px;font-family:'Liberation Serif',serif;font-size:10.6px;color:#606266">0</div><div class="a" style="left:576px;top:161.335px;line-height:12px;font-family:'Liberation Serif',serif;font-size:10.6px;color:#606266">0</div><div class="a" style="left:651px;top:161.335px;line-height:12px;font-family:'Liberation Serif',serif;font-size:10.6px;color:#606266">0</div><div class="a" style="left:726px;top:161.335px;line-height:12px;font-family:'Liberation Serif',serif;font-size:10.6px;color:#606266">0</div><div class="a" style="left:801.5px;top:161.335px;line-height:12px;font-family:'Liberation Serif',serif;font-size:10.6px;color:#606266">0</div><div class="a" style="left:0;top:182px;width:823px;height:1px;background:#ebebeb"></div><div class="a" style="left:7px;top:192.60500000000002px;line-height:12px;font-size:10px;color:#606266">7</div><div class="a" style="left:57px;top:191.80500000000004px;line-height:12px;font-size:9px;letter-spacing:-0.35px;color:#606266">宁夏羊肉专卖店</div><div class="a" style="left:182px;top:191.50500000000002px;line-height:12px;font-family:'Liberation Serif',serif;font-size:10.6px;color:#606266">0</div><div class="a" style="left:276px;top:191.50500000000002px;line-height:12px;font-family:'Liberation Serif',serif;font-size:10.6px;color:#606266">0</div><div class="a" style="left:351px;top:191.50500000000002px;line-height:12px;font-family:'Liberation Serif',serif;font-size:10.6px;color:#606266">0</div><div class="a" style="left:426px;top:191.50500000000002px;line-height:12px;font-family:'Liberation Serif',serif;font-size:10.6px;color:#606266">0</div><div class="a" style="left:501px;top:191.50500000000002px;line-height:12px;font-family:'Liberation Serif',serif;font-size:10.6px;color:#606266">0</div><div class="a" style="left:576px;top:191.50500000000002px;line-height:12px;font-family:'Liberation Serif',serif;font-size:10.6px;color:#606266">0</div><div class="a" style="left:651px;top:191.50500000000002px;line-height:12px;font-family:'Liberation Serif',serif;font-size:10.6px;color:#606266">0</div><div class="a" style="left:726px;top:191.50500000000002px;line-height:12px;font-family:'Liberation Serif',serif;font-size:10.6px;color:#606266">0</div><div class="a" style="left:801.5px;top:191.50500000000002px;line-height:12px;font-family:'Liberation Serif',serif;font-size:10.6px;color:#606266">0</div><div class="a" style="left:0;top:212px;width:823px;height:1px;background:#ebebeb"></div><div class="a" style="left:7px;top:222.77499999999998px;line-height:12px;font-size:10px;color:#606266">8</div><div class="a" style="left:57px;top:221.975px;line-height:12px;font-size:9px;letter-spacing:-0.35px;color:#606266">栗栗张三三</div><div class="a" style="left:181.8px;top:222.77499999999998px;line-height:0"><svg width="13" height="10" viewBox="0 0 13 10"><rect x="0.45" y="2.75" width="2.3" height="5.6" fill="#d5dadf" stroke="#7a7a7a" stroke-width="0.7"/><path d="M2.8 2.8 L4.4 0.5 H5.3 L5 2.4 H11.6 Q12.2 3 11.6 3.7 H8.4 L7.6 8.35 H2.8" stroke="#747474" stroke-width="0.7" fill="none" stroke-linejoin="round"/></svg></div><div class="a" style="left:198px;top:221.77499999999998px;line-height:12px;font-family:'Liberation Serif',serif;font-size:8.8px;color:#707070">5</div><div class="a" style="left:276px;top:221.67499999999998px;line-height:12px;font-family:'Liberation Serif',serif;font-size:10.6px;color:#606266">0</div><div class="a" style="left:350.8px;top:222.77499999999998px;line-height:0"><svg width="13" height="10" viewBox="0 0 13 10"><rect x="0.45" y="2.75" width="2.3" height="5.6" fill="#d5dadf" stroke="#7a7a7a" stroke-width="0.7"/><path d="M2.8 2.8 L4.4 0.5 H5.3 L5 2.4 H11.6 Q12.2 3 11.6 3.7 H8.4 L7.6 8.35 H2.8" stroke="#747474" stroke-width="0.7" fill="none" stroke-linejoin="round"/></svg></div><div class="a" style="left:367px;top:221.77499999999998px;line-height:12px;font-family:'Liberation Serif',serif;font-size:8.8px;color:#707070">1</div><div class="a" style="left:426px;top:221.67499999999998px;line-height:12px;font-family:'Liberation Serif',serif;font-size:10.6px;color:#606266">0</div><div class="a" style="left:500.8px;top:222.77499999999998px;line-height:0"><svg width="13" height="10" viewBox="0 0 13 10"><rect x="0.45" y="2.75" width="2.3" height="5.6" fill="#d5dadf" stroke="#7a7a7a" stroke-width="0.7"/><path d="M2.8 2.8 L4.4 0.5 H5.3 L5 2.4 H11.6 Q12.2 3 11.6 3.7 H8.4 L7.6 8.35 H2.8" stroke="#747474" stroke-width="0.7" fill="none" stroke-linejoin="round"/></svg></div><div class="a" style="left:517px;top:221.77499999999998px;line-height:12px;font-family:'Liberation Serif',serif;font-size:8.8px;color:#707070">4</div><div class="a" style="left:576px;top:221.67499999999998px;line-height:12px;font-family:'Liberation Serif',serif;font-size:10.6px;color:#606266">0</div><div class="a" style="left:651px;top:221.67499999999998px;line-height:12px;font-family:'Liberation Serif',serif;font-size:10.6px;color:#606266">0</div><div class="a" style="left:726px;top:221.67499999999998px;line-height:12px;font-family:'Liberation Serif',serif;font-size:10.6px;color:#606266">0</div><div class="a" style="left:801.5px;top:221.67499999999998px;line-height:12px;font-family:'Liberation Serif',serif;font-size:10.6px;color:#606266">1,152</div></div>
<div class="a" style="left:121px;top:228px;width:1px;height:285px;background:#e8e9ec"></div>
<div class="a" style="left:121px;top:511px;width:826px;height:3px;background:#f3f3f3;border-bottom:1px solid #e6e6e6"></div>
<div class="a" style="left:121px;top:511px;width:580px;height:3px;background:#d0d0d0;border-radius:1px"></div>
<div class="a" style="left:944px;top:284px;width:3px;height:107px;background:#d6d6d6"></div>
<div class="a" style="left:947px;top:112px;width:13px;height:453px;background:#fff"></div>
<div class="a" style="left:692px;top:532px;font-size:9px;line-height:12px;color:#6a6c70">共 <span style="font-size:9.5px">16</span> 条</div>
<div class="a" style="left:733px;top:528.5px;width:62.5px;height:17.5px;border:1px solid #e2e3e6;border-radius:2px;background:#fff"></div>
<div class="a" style="left:744.5px;top:532px;font-size:9px;letter-spacing:-0.2px;line-height:12px;color:#606266">30条/页</div>
<svg class="a" style="left:783px;top:535px" width="8" height="5" viewBox="0 0 8 5"><path d="M0.5 0.5 L4 4 L7.5 0.5" stroke="#c0c4cc" stroke-width="0.8" fill="none"/></svg>
<svg class="a" style="left:811px;top:533px" width="5" height="8" viewBox="0 0 5 8"><path d="M4 0.5 L0.8 4 L4 7.5" stroke="#b0b4bc" stroke-width="0.8" fill="none"/></svg>
<div class="a" style="left:835.5px;top:532px;font-size:9.5px;font-weight:bold;line-height:12px;color:#4a86c5">1</div>
<svg class="a" style="left:860px;top:533px" width="5" height="8" viewBox="0 0 5 8"><path d="M1 0.5 L4.2 4 L1 7.5" stroke="#b0b4bc" stroke-width="0.8" fill="none"/></svg>
<div class="a" style="left:886px;top:531.5px;font-size:9px;line-height:12px;color:#606266">前往</div>
<div class="a c" style="left:905px;top:528.5px;width:28.5px;height:17.5px;border:1px solid #e2e3e6;border-radius:2px;background:#fff;font-size:11px;color:#444">1</div>
<div class="a" style="left:936px;top:531.5px;font-size:9px;line-height:12px;color:#606266">页</div>
<div class="a" style="left:944px;top:80px;width:16px;height:485px;background:linear-gradient(to right,rgba(0,0,0,0),rgba(0,0,0,0.065))"></div>
<div class="a" style="left:0;top:565px;width:960px;height:45px;background:#2c3033"></div>
<div class="a" style="left:0;top:585.5px;width:291px;height:24.5px;background:#131416;border-radius:0 6px 0 0"></div>
<div class="a" style="left:0;top:585.5px;width:23.5px;height:24.5px;background:#f58220"></div>
<svg class="a" style="left:4px;top:590px" width="16" height="16" viewBox="0 0 16 16"><circle cx="8" cy="5" r="2.8" fill="#fff4e0"/><path d="M1.5 14.5 Q2 9 5.5 8.5 L8 10 L10.5 8.5 Q14 9 14.5 14.5Z" fill="#fff4e0"/></svg>
<svg class="a" style="left:27px;top:590px" width="14" height="16" viewBox="0 0 14 16"><rect x="4.3" y="0.8" width="5.4" height="10" rx="2.7" fill="#fff"/><path d="M1.5 7.5 Q1.5 12.8 7 12.8 Q12.5 12.8 12.5 7.5 M7 12.8 V15" stroke="#fff" stroke-width="1.2" fill="none"/></svg>
<svg class="a" style="left:44px;top:591px" width="14" height="14" viewBox="0 0 14 14"><rect x="0.8" y="0.8" width="12.4" height="9" rx="1" fill="#fff"/><path d="M5.5 6.5 Q6 4.5 8.3 4.3 M7.3 3.2 L8.6 4.3 L7.3 5.4" stroke="#131416" stroke-width="1" fill="none"/><rect x="3.5" y="11.5" width="7" height="1.2" fill="#fff"/></svg>
<div class="a" style="left:61px;top:592.3px;letter-spacing:0.13px;font-size:12.4px;line-height:16px;color:#fff">金禾通技术王斌18662591081的屏幕共享</div>
<div class="a" style="left:310px;top:17px;width:340px;height:38px;background:#fff;border-radius:8px;box-shadow:0 1px 4px rgba(0,0,0,0.15)"></div>
<svg class="a" style="left:322px;top:28px" width="16" height="16" viewBox="0 0 16 16"><circle cx="8" cy="8" r="7.5" fill="#1677f2"/><rect x="7" y="3.5" width="2" height="6" rx="1" fill="#fff"/><circle cx="8" cy="11.8" r="1.1" fill="#fff"/></svg>
<div class="a" style="left:346px;top:28px;font-size:14px;line-height:18px;color:#1f1f1f">会议已超过2人，自动转为60分钟限时会议。</div>
<svg class="a" style="left:624px;top:30px" width="12" height="12" viewBox="0 0 12 12"><path d="M1 1 L11 11 M11 1 L1 11" stroke="#74777b" stroke-width="2"/></svg>
</body></html>
